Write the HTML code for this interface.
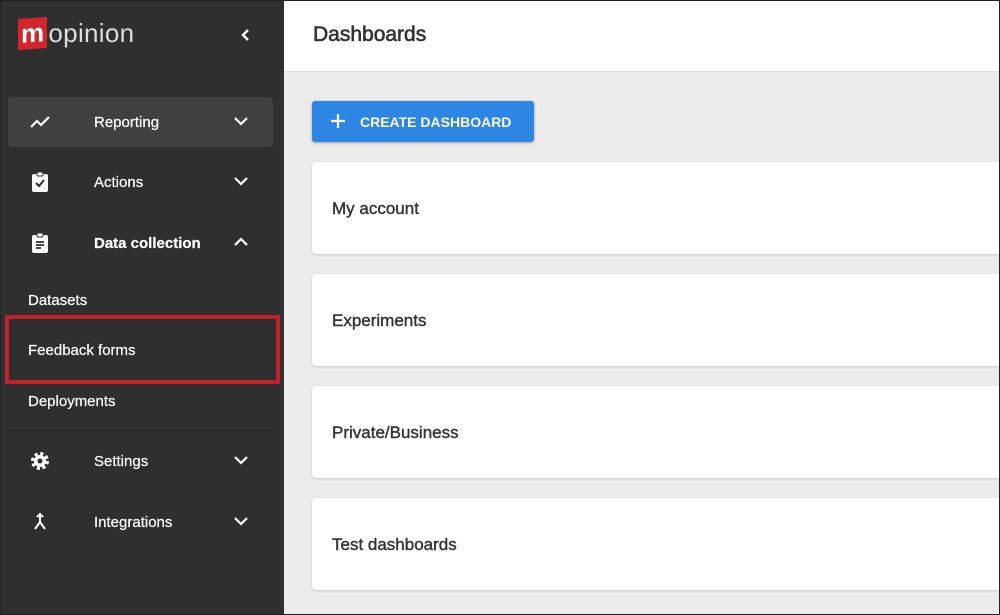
<!DOCTYPE html>
<html><head><style>
*{box-sizing:border-box;margin:0;padding:0}
body{width:1000px;height:615px;overflow:hidden;font-family:"Liberation Sans",sans-serif;background:#ececec;position:relative}
.frame{position:absolute;inset:0;border:1px solid #222;z-index:10;pointer-events:none}
.side{position:absolute;left:0;top:0;width:284px;height:615px;background:#2f2f2f;color:#fff}
.logo{position:absolute;left:18px;top:18px;font-size:26px;color:#ddd;letter-spacing:.3px}
.logo b{display:inline-block;background:#d3262c;color:#fff;padding:0 3px;transform:skewY(-4deg);font-weight:bold;margin-right:1px}
.item{position:absolute;left:8px;width:265px;height:50px;border-radius:4px;font-size:15px}
.item .t{position:absolute;left:86px;top:17px;-webkit-text-stroke:.2px #fff}
.item svg.i{position:absolute;left:20px;top:13px}
.item svg.c{position:absolute;left:225px;top:18px}
.sub{position:absolute;left:28px;font-size:15px;-webkit-text-stroke:.2px #fff}
.main{position:absolute;left:284px;top:0;right:0;height:615px}
.hdr{position:absolute;left:0;right:0;top:0;height:72px;background:#fff;border-bottom:1px solid #ddd}
.hdr h1{position:absolute;left:29px;top:23px;font-size:21px;font-weight:normal;color:#333;-webkit-text-stroke:.6px #333}
.btn{position:absolute;left:28px;top:101px;width:222px;height:41px;background:#2d86e4;border-radius:3px;color:#fff;font-size:14px;font-weight:bold;box-shadow:0 1px 3px rgba(0,0,0,.3)}
.btn span{position:absolute;left:48px;top:13px}
.btn svg{position:absolute;left:19px;top:13px}
.card{position:absolute;left:28px;width:700px;height:92px;background:#fff;border-radius:4px;box-shadow:0 1px 2px rgba(0,0,0,.15)}
.card span{position:absolute;left:20px;top:37px;font-size:17px;color:#333;-webkit-text-stroke:.4px #333}
</style></head><body>
<div class="side">
<div class="logo"><b>m</b>opinion</div>
<svg style="position:absolute;left:240px;top:27px" width="12" height="16" viewBox="0 0 12 16"><path d="M8 3l-5 5 5 5" stroke="#fff" stroke-width="2.4" fill="none"/></svg>
<div class="item" style="top:97px;background:#404040">
<svg class="i" width="24" height="24" viewBox="0 0 24 24"><path d="M3 17l6-6 4 4 8-8" stroke="#fff" stroke-width="2.2" fill="none"/></svg>
<span class="t">Reporting</span>
<svg class="c" width="16" height="12" viewBox="0 0 16 12"><path d="M2 3l6 6 6-6" stroke="#fff" stroke-width="2.2" fill="none"/></svg></div>
<div class="item" style="top:157px">
<svg class="i" width="24" height="24" viewBox="0 0 24 24"><rect x="4" y="4" width="16" height="18" rx="2" fill="#fff"/><rect x="9" y="2" width="6" height="4" rx="1" fill="#fff" stroke="#2f2f2f"/><path d="M8 13l3 3 5-6" stroke="#2f2f2f" stroke-width="2" fill="none"/></svg>
<span class="t">Actions</span>
<svg class="c" width="16" height="12" viewBox="0 0 16 12"><path d="M2 3l6 6 6-6" stroke="#fff" stroke-width="2.2" fill="none"/></svg></div>
<div class="item" style="top:218px">
<svg class="i" width="24" height="24" viewBox="0 0 24 24"><rect x="4" y="4" width="16" height="18" rx="2" fill="#fff"/><rect x="9" y="2" width="6" height="4" rx="1" fill="#fff" stroke="#2f2f2f"/><path d="M8 11h8M8 14h8M8 17h5" stroke="#2f2f2f" stroke-width="1.8"/></svg>
<span class="t" style="font-weight:bold">Data collection</span>
<svg class="c" width="16" height="12" viewBox="0 0 16 12"><path d="M2 9l6-6 6 6" stroke="#fff" stroke-width="2.2" fill="none"/></svg></div>
<div class="sub" style="top:292px">Datasets</div>
<div class="sub" style="top:342px">Feedback forms</div>
<div style="position:absolute;left:5px;top:315px;width:275px;height:69px;border:4px solid #c4202a"></div>
<div class="sub" style="top:393px">Deployments</div>
<div style="position:absolute;left:8px;top:430px;width:265px;height:1px;background:#262626"></div>
<div class="item" style="top:436px">
<svg class="i" width="24" height="24" viewBox="0 0 24 24"><circle cx="12" cy="12" r="7" fill="none" stroke="#fff" stroke-width="4" stroke-dasharray="3 2.5"/><circle cx="12" cy="12" r="6" fill="#fff"/><circle cx="12" cy="12" r="2.5" fill="#2f2f2f"/></svg>
<span class="t">Settings</span>
<svg class="c" width="16" height="12" viewBox="0 0 16 12"><path d="M2 3l6 6 6-6" stroke="#fff" stroke-width="2.2" fill="none"/></svg></div>
<div class="item" style="top:497px">
<svg class="i" width="24" height="24" viewBox="0 0 24 24"><path d="M12 4v8l-5 7M12 12l5 7M9 7l3-3 3 3" stroke="#fff" stroke-width="2" fill="none"/></svg>
<span class="t">Integrations</span>
<svg class="c" width="16" height="12" viewBox="0 0 16 12"><path d="M2 3l6 6 6-6" stroke="#fff" stroke-width="2.2" fill="none"/></svg></div>
</div>
<div class="main">
<div class="hdr"><h1>Dashboards</h1></div>
<div class="btn"><svg width="14" height="14" viewBox="0 0 14 14"><path d="M7 0v14M0 7h14" stroke="#fff" stroke-width="2.2"/></svg><span>CREATE DASHBOARD</span></div>
<div class="card" style="top:162px"><span>My account</span></div>
<div class="card" style="top:274px"><span>Experiments</span></div>
<div class="card" style="top:386px"><span>Private/Business</span></div>
<div class="card" style="top:498px"><span>Test dashboards</span></div>
</div>
<div class="frame"></div>
</body></html>
